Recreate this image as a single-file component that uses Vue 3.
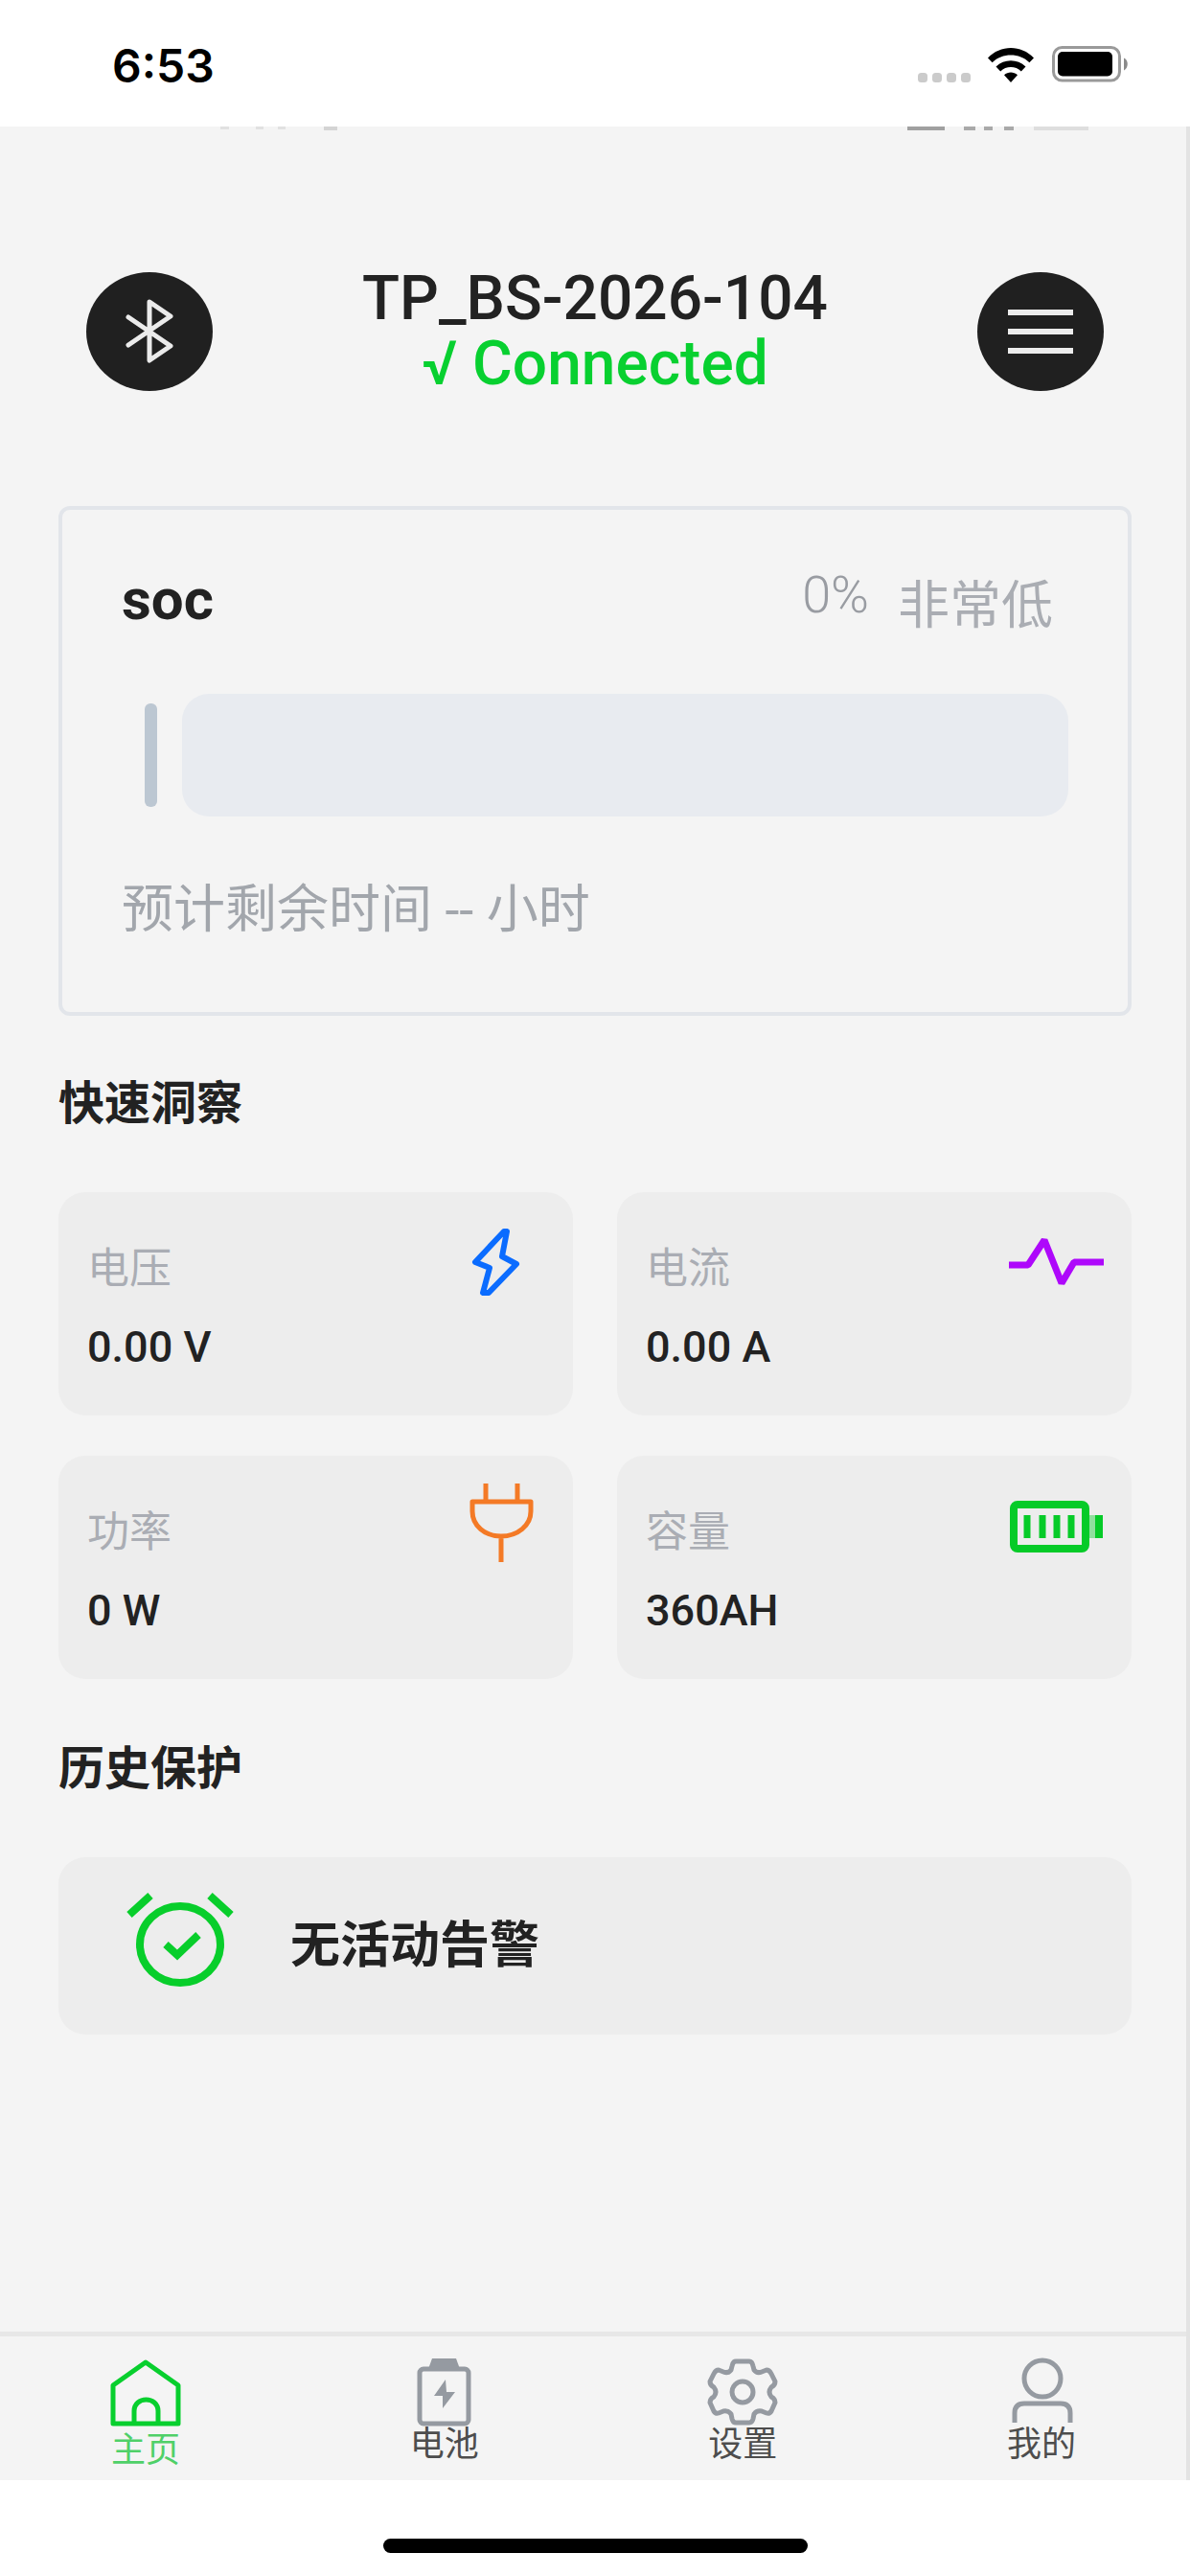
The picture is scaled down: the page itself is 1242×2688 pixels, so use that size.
<script setup>
import { ref } from 'vue'

const soc = ref(0)

const insights = [
  { id: 'voltage', label: '电压', value: '0.00 V' },
  { id: 'current', label: '电流', value: '0.00 A' },
  { id: 'power', label: '功率', value: '0 W' },
  { id: 'capacity', label: '容量', value: '360AH' }
]

const tabs = [
  { id: 'home', label: '主页' },
  { id: 'battery', label: '电池' },
  { id: 'settings', label: '设置' },
  { id: 'mine', label: '我的' }
]

const activeTab = ref('home')
</script>

<template>
  <div class="screen">
    <div class="status-bar">
      <span class="clock">6:53</span>
      <div class="status-icons">
        <svg class="dots" width="56" height="10" viewBox="0 0 56 10" aria-hidden="true">
          <rect v-for="n in 4" :key="n" :x="(n - 1) * 15" y="0" width="10" height="10" rx="3.500" fill="#cbcbcb" />
        </svg>
        <svg class="wifi" width="48" height="36" viewBox="0 0 48 36" aria-hidden="true">
          <path d="M0 10.500C13-3.500 35-3.500 48 10.500l-4.600 4.800C33 5 15 5 4.600 15.300z" />
          <path d="M8.500 19.500C17 11 31 11 39.500 19.500l-4.700 4.900C29 18.600 19 18.600 13.200 24.400z" />
          <path d="M17 28.300C21 24.700 27 24.700 31 28.300L24 36z" />
        </svg>
        <svg class="battery" width="80" height="38" viewBox="0 0 80 38" aria-hidden="true">
          <rect x="1.500" y="1.500" width="69" height="34.500" rx="9" fill="none" stroke="#9a9a9a" stroke-width="3" />
          <rect x="6" y="6" width="57" height="25.500" rx="5" />
          <path d="M75 12.500c5 2 5 10.500 0 13z" fill="#8a8a8a" />
        </svg>
      </div>
    </div>

    <div class="app">
      <div class="clipped" aria-hidden="true">
        <svg width="130" height="4" viewBox="0 0 130 4" fill="#d4d4d4">
          <path d="M0 0h9v3H0zM37 0h8v3h-8zM60 0h8v3h-8z" opacity=".6" />
          <path d="M108 0h14v4h-14z" />
        </svg>
        <svg width="220" height="4" viewBox="0 0 220 4">
          <path d="M4 0h39v4H4z" fill="#a0a0a0" />
          <path d="M63 0h12v4H63zM84 0h9v4h-9zM105 0h10v4h-10z" fill="#a9a9a9" />
          <path d="M136 0h57v4h-57z" fill="#dedede" />
        </svg>
      </div>

      <header class="header">
        <button class="round" type="button" aria-label="蓝牙">
          <svg width="54" height="70" viewBox="0 0 54 70" fill="none" stroke="#ebebeb" stroke-width="5" stroke-linejoin="round" stroke-linecap="round" aria-hidden="true">
            <path d="M5 20L49 50L27 65V4L49 19L5 49" />
          </svg>
        </button>
        <div class="device">
          <h1 class="device-name">TP_BS-2026-104</h1>
          <p class="device-state">√ Connected</p>
        </div>
        <button class="round" type="button" aria-label="菜单">
          <svg width="68" height="46" viewBox="0 0 68 46" fill="#ececec" aria-hidden="true">
            <path d="M0 0h68v6H0zM0 20h68v6H0zM0 40h68v6H0z" />
          </svg>
        </button>
      </header>

      <main class="content">
        <section class="soc-card">
          <div class="soc-head">
            <h2 class="soc-title">soc</h2>
            <span class="soc-percent">{{ soc }}%</span>
            <span class="soc-level">非常低</span>
          </div>
          <div class="gauge">
            <span class="gauge-tip"></span>
            <div class="gauge-track">
              <div class="gauge-fill" :style="{ width: soc + '%' }"></div>
            </div>
          </div>
          <p class="remaining">预计剩余时间 -- 小时</p>
        </section>

        <h2 class="section-title">快速洞察</h2>
        <div class="insights">
          <article v-for="item in insights" :key="item.id" class="tile">
            <div class="tile-text">
              <h3 class="tile-label">{{ item.label }}</h3>
              <p class="tile-value">{{ item.value }}</p>
            </div>
            <svg v-if="item.id === 'voltage'" width="110" height="88" viewBox="0 0 110 88" fill="none" stroke="#0b6cff" stroke-width="6" stroke-linejoin="round" aria-hidden="true">
              <path d="M66 13L36 45L51 51L44 77H50L79 47L64 39L69 13Z" />
            </svg>
            <svg v-else-if="item.id === 'current'" width="110" height="88" viewBox="0 0 110 88" fill="none" stroke="#ae08fb" stroke-width="7" stroke-linejoin="bevel" aria-hidden="true">
              <path d="M10 48H30L47 22L65 67L78 45H109" />
            </svg>
            <svg v-else-if="item.id === 'power'" width="110" height="88" viewBox="0 0 110 88" fill="none" stroke="#f47a26" stroke-width="5" stroke-linejoin="round" aria-hidden="true">
              <path d="M47 1V20M80 1V20M33 20H94V30C94 45 80 56 63 56S33 45 33 30ZM63 56V83" />
            </svg>
            <svg v-else width="110" height="88" viewBox="0 0 110 88" fill="none" stroke="#06cb28" aria-hidden="true">
              <rect x="15" y="23" width="75" height="46" rx="4" stroke-width="8" />
              <path d="M29 34V58M45 34V58M60 34V58M75 34V58" stroke-width="7" />
              <path d="M97 34V58" stroke-width="6" opacity=".4" />
              <path d="M104 34V58" stroke-width="8" />
            </svg>
          </article>
        </div>

        <h2 class="section-title history">历史保护</h2>
        <section class="alert">
          <svg class="alert-icon" width="114" height="100" viewBox="0 0 114 100" fill="none" stroke="#08ce2b" stroke-width="8" aria-hidden="true">
            <ellipse cx="57" cy="55" rx="42" ry="40" />
            <path d="M4 24L26 4M88 4L110 24" />
            <path d="M42 55L54 66L76 45" />
          </svg>
          <p class="alert-text">无活动告警</p>
        </section>
      </main>

      <nav class="tabs">
        <button
          v-for="tab in tabs"
          :key="tab.id"
          type="button"
          class="tab"
          :class="{ active: tab.id === activeTab }"
          @click="activeTab = tab.id"
        >
          <svg v-if="tab.id === 'home'" width="74" height="72" viewBox="0 0 74 72" fill="none" stroke="currentColor" stroke-width="5" stroke-linejoin="round" aria-hidden="true">
            <path d="M3 29L37 5L71 29V69H3ZM25 69V56C25 40 50 40 50 56V69" />
          </svg>
          <svg v-else-if="tab.id === 'battery'" width="74" height="72" viewBox="0 0 74 72" fill="none" stroke="currentColor" stroke-width="5" aria-hidden="true">
            <rect x="11" y="12" width="51" height="57" rx="4" />
            <path d="M20 12L24 1H49L53 12Z" fill="currentColor" stroke="none" />
            <path d="M38 23L26 40H35V53L48 36H39Z" fill="currentColor" stroke="none" />
          </svg>
          <svg v-else-if="tab.id === 'settings'" width="74" height="72" viewBox="0 0 74 72" fill="none" stroke="currentColor" stroke-width="5" stroke-linejoin="round" aria-hidden="true">
            <path d="M30 4H44Q47 4 48 9L49 13Q52 17 57 15L62 13Q65 13 67 17L71 25Q71 29 67 31Q63 36 67 41Q71 43 71 47L67 56Q65 59 62 58L57 56Q52 55 49 59L48 64Q47 68 44 68H30Q27 68 26 64L25 59Q22 55 17 56L12 58Q9 59 7 56L3 47Q3 43 7 41Q11 36 7 31Q3 29 3 25L7 17Q9 13 12 13L17 15Q22 17 25 13L26 9Q27 4 30 4Z" />
            <circle cx="37" cy="36" r="11" />
          </svg>
          <svg v-else width="74" height="72" viewBox="0 0 74 72" fill="none" stroke="currentColor" stroke-width="5" aria-hidden="true">
            <circle cx="38" cy="22" r="19" />
            <path d="M9 68V58Q9 48 19 48H57Q67 48 67 58V68" />
          </svg>
          <span class="tab-label">{{ tab.label }}</span>
        </button>
      </nav>
    </div>

    <footer class="home-area">
      <span class="home-indicator"></span>
    </footer>
  </div>
</template>

<style>
body {
  margin: 0;
  background: #fff;
}
</style>

<style scoped>
.screen {
  display: flex;
  flex-direction: column;
  min-height: 100vh;
  font-family: Roboto, "Noto Sans CJK SC", sans-serif;
  color: #222;
}

h1,
h2,
h3,
p {
  margin: 0;
}

button {
  padding: 0;
  border: 0;
  font: inherit;
  cursor: pointer;
}

svg {
  display: block;
  flex: none;
}

.status-bar {
  display: flex;
  justify-content: space-between;
  height: 132px;
  padding: 0 64px 0 117px;
  box-sizing: border-box;
}

.clock {
  margin-top: 41px;
  font-family: Inter, sans-serif;
  font-size: 48px;
  font-weight: 600;
  line-height: 56px;
  color: #000;
}

.status-icons {
  display: flex;
  align-items: flex-end;
  height: 86px;
}

.wifi {
  margin: 0 19px 0 17px;
}

.app {
  display: flex;
  flex: 1;
  flex-direction: column;
  background: #f4f4f4;
  border-right: 4px solid #e3e3e3;
}

.clipped {
  display: flex;
  justify-content: space-between;
  padding: 0 75px 0 230px;
}

.header {
  display: flex;
  align-items: center;
  justify-content: space-between;
  padding: 142px 86px 114px 90px;
}

.round {
  display: flex;
  align-items: center;
  justify-content: center;
  width: 132px;
  height: 124px;
  border-radius: 50%;
  background: #202020;
}

.device {
  text-align: center;
}

.device-name {
  font-size: 64px;
  font-weight: 500;
  line-height: 68px;
}

.device-state {
  font-size: 64px;
  font-weight: 500;
  line-height: 68px;
  color: #08d030;
}

.content {
  flex: 1;
  padding: 0 57px 0 61px;
}

.soc-card {
  padding: 64px 62px 74px;
  border: 4px solid #e2e5ea;
  border-radius: 12px;
}

.soc-head {
  display: flex;
  align-items: flex-start;
  height: 62px;
  padding-right: 16px;
  line-height: 50px;
}

.soc-title {
  flex: 1;
  font-size: 60px;
  font-weight: 700;
  line-height: 60px;
}

.soc-percent {
  font-size: 54px;
  font-weight: 300;
  color: #999ca2;
}

.soc-level {
  align-self: flex-end;
  margin-left: 30px;
  font-size: 54px;
  color: #aaadb3;
}

.gauge {
  display: flex;
  align-items: center;
  gap: 26px;
  margin-top: 66px;
  padding-left: 24px;
}

.gauge-tip {
  width: 13px;
  height: 108px;
  border-radius: 6px;
  background: #bcc7d2;
}

.gauge-track {
  flex: 1;
  height: 128px;
  overflow: hidden;
  border-radius: 28px;
  background: #e8ebf0;
}

.gauge-fill {
  height: 100%;
  background: #08d030;
}

.remaining {
  margin-top: 66px;
  font-size: 54px;
  line-height: 64px;
  color: #a2a6ac;
}

.section-title {
  margin-top: 60px;
  font-size: 48px;
  font-weight: 700;
  line-height: 64px;
}

.history {
  margin-top: 62px;
}

.insights {
  display: grid;
  grid-template-columns: 1fr 1fr;
  gap: 42px 46px;
  margin-top: 60px;
}

.tile {
  display: flex;
  justify-content: space-between;
  height: 233px;
  padding: 28px 28px 0 30px;
  box-sizing: border-box;
  border-radius: 28px;
  background: #ededed;
}

.tile-text {
  padding-top: 22px;
}

.tile-label {
  font-size: 44px;
  font-weight: 400;
  line-height: 60px;
  color: #aaadb4;
}

.tile-value {
  margin-top: 22px;
  font-size: 45px;
  font-weight: 500;
  line-height: 60px;
}

.alert {
  display: flex;
  align-items: center;
  gap: 58px;
  height: 185px;
  margin-top: 60px;
  padding: 0 70px;
  box-sizing: border-box;
  border-radius: 28px;
  background: #ededed;
}

.alert-icon {
  margin-bottom: 14px;
}

.alert-text {
  font-size: 52px;
  font-weight: 700;
  line-height: 64px;
}

.tabs {
  display: flex;
  justify-content: space-between;
  padding: 22px 114px 12px 115px;
  border-top: 5px solid #e7e7e7;
}

.tab {
  display: flex;
  flex-direction: column;
  align-items: center;
  width: 74px;
  height: 116px;
  background: transparent;
  color: #959aa1;
}

.tab-label {
  font-size: 36px;
  line-height: 38px;
  color: #4d4d4d;
}

.tab.active {
  color: #08cf2e;
}

.tab.active .tab-label {
  margin-top: 6px;
  color: #4fd068;
}

.home-area {
  display: flex;
  justify-content: center;
  padding: 61px 0 24px;
}

.home-indicator {
  width: 443px;
  height: 15px;
  border-radius: 8px;
  background: #000;
}
</style>
